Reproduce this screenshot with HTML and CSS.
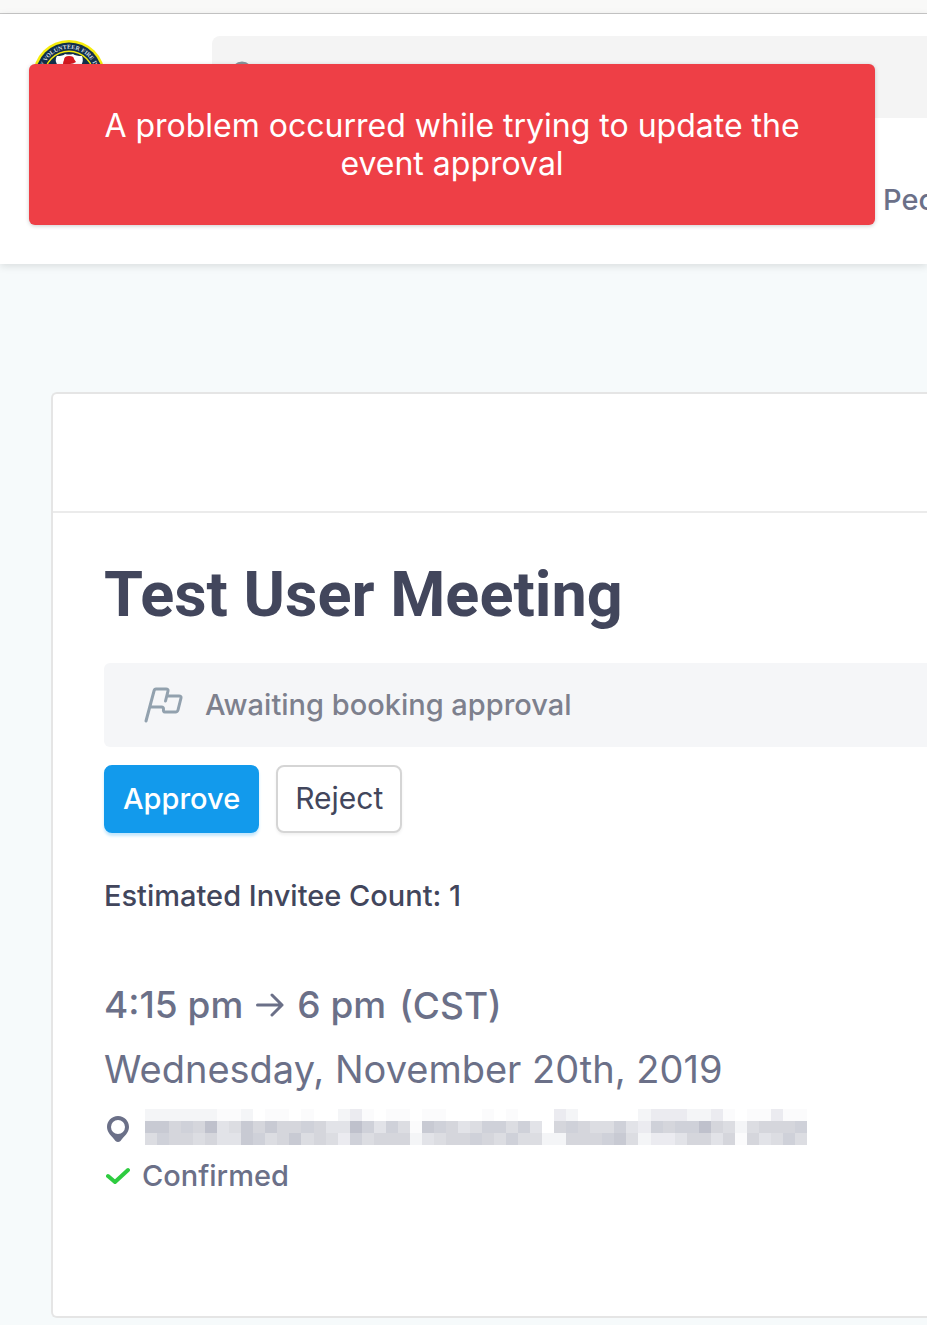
FILE: index.html
```html
<!DOCTYPE html>
<html lang="en">
<head>
<meta charset="utf-8">
<title>Test User Meeting</title>
<link rel="stylesheet" href="styles.css">
</head>
<body>
<div class="browser-edge"></div>
<header class="header">
  <div class="header-top">
    <svg class="logo" viewBox="0 0 72 72" role="img" aria-label="Volunteer Fire Department">
      <defs><path id="ring" d="M17 55A27 27 0 1 1 55 55"/></defs>
      <circle cx="36" cy="36" r="36" fill="#f5ec0c"/>
      <circle cx="36" cy="36" r="33.500" fill="#12304b"/>
      <circle cx="36" cy="36" r="25.500" fill="#f5ec0c"/>
      <circle cx="36" cy="36" r="24" fill="#12304b"/>
      <path d="M24 16q6 0 8-2 4 1 8 0 3 2 9 2 2 4-1 10v15H25V26q-4-6-1-10z" fill="#fff"/>
      <path d="M31 20q0-4 5-4 5 0 5 3l2 3q-3 2-6 2-5 2-7 0 0-2 1-4z" fill="#d31920"/>
      <text class="logo-text" text-anchor="middle"><textPath href="#ring" startOffset="50%">CITY VOLUNTEER FIRE DEPT</textPath></text>
    </svg>
    <label class="search">
      <svg class="search-icon" viewBox="0 0 26 32" aria-hidden="true"><circle cx="10" cy="11" r="9"/><path d="M17 18l7 8"/></svg>
      <input class="search-input" type="search" aria-label="Search">
    </label>
  </div>
  <nav class="nav"><a class="nav-link" href="#people">People</a></nav>
</header>
<div class="toast" role="alert">A problem occurred while trying to update the event approval</div>
<main class="page">
  <article class="card">
    <div class="card-bar"></div>
    <div class="card-body">
      <h1 class="title">Test User Meeting</h1>
      <div class="notice">
        <svg class="flag" viewBox="0 0 40 36" aria-hidden="true"><path d="M2 34L10 4Q10.500 2 12 2H22Q24.500 2 24 4L21.500 14M23 9H35Q37.500 9 37 11L34 23Q33.500 25 31.500 25H21Q19 25 19.500 22Q19.500 20 17.500 20H6"/></svg>
        <span>Awaiting booking approval</span>
      </div>
      <div class="actions">
        <button class="button button-primary" type="button">Approve</button>
        <button class="button" type="button">Reject</button>
      </div>
      <p class="count">Estimated Invitee Count: 1</p>
      <div class="time">
        <span>4:15 pm</span>
        <svg class="arrow" viewBox="0 0 28 24" aria-hidden="true"><path d="M1.500 12H26M16 2L26 12L16 22"/></svg>
        <span>6 pm</span>
        <span class="zone">(CST)</span>
      </div>
      <p class="date">Wednesday, November 20th, 2019</p>
      <div class="place">
        <svg class="pin" viewBox="0 0 22 26" aria-hidden="true"><path fill-rule="evenodd" d="M11 0C4.500 0 0 5 0 11C0 17 5 20 8.500 25Q11 27 13.500 25C17 20 22 17 22 11C22 5 17.500 0 11 0ZM11 4A7 7 0 1 1 11 18A7 7 0 1 1 11 4Z"/></svg>
        <svg class="redacted" viewBox="0 0 55 3" preserveAspectRatio="none" shape-rendering="crispEdges" role="img" aria-label="Address hidden"></svg>
      </div>
      <div class="status">
        <svg class="check" viewBox="0 0 24 18" aria-hidden="true"><path d="M2 9L9 15L22 3"/></svg>
        <span>Confirmed</span>
      </div>
    </div>
  </article>
</main>
<script src="redact.js"></script>
</body>
</html>
```
FILE: redact.js
```js
// Fills the hidden address with a mosaic; each digit is a shade.
const shades = ["#ffffff", "#fbfbfc", "#f4f5f7", "#ebebf0", "#e2e3e8", "#dcdde2", "#d5d6dc", "#cfd1d9", "#c8cad3", "#bfc1cc"];
const rows = [
  "2222221120110100231" + "011011000101000320" + "000023332231011311",
  "8867694586866764497" + "475187645775740676" + "557437677965256667",
  "5766564487568565375" + "666245667657552266" + "678523346646164575"
];
const mosaic = document.querySelector(".redacted");
rows.forEach((row, y) => {
  [...row].forEach((shade, x) => {
    const cell = document.createElementNS("http://www.w3.org/2000/svg", "rect");
    cell.setAttribute("x", x);
    cell.setAttribute("y", y);
    cell.setAttribute("width", 1);
    cell.setAttribute("height", 1);
    cell.setAttribute("fill", shades[shade]);
    mosaic.append(cell);
  });
});
```
FILE: styles.css
```css
* { box-sizing: border-box; }
body {
  margin: 0;
  background: #f6fafb;
  color: #6b7088;
  font-family: Inter, "Liberation Sans", sans-serif;
}
.browser-edge { height: 14px; background: #f9f9f8; border-bottom: 1px solid #c8c8c8; }
.header { height: 250px; background: #fff; box-shadow: 0 2px 8px rgba(0, 0, 0, 0.12); }
.header-top { display: flex; gap: 107px; padding: 22px 0 0 33px; }
.logo { width: 72px; height: 72px; margin-top: 4px; flex: none; }
.logo-text { font: 700 6px "Liberation Serif", serif; fill: #d9dfe3; }
.search { display: flex; align-items: center; flex: 1; height: 82px; padding-left: 20px; background: #f4f4f4; border-radius: 8px 0 0 8px; }
.search-icon { width: 26px; height: 32px; fill: none; stroke: #89949b; stroke-width: 3; }
.search-input { flex: 1; min-width: 0; border: 0; background: none; font: inherit; }
.nav { display: flex; overflow: hidden; padding: 64px 0 0 883px; }
.nav-link { color: #6b7088; font-size: 29px; font-weight: 500; line-height: 36px; text-decoration: none; }
.toast {
  position: absolute;
  top: 64px;
  left: 29px;
  right: 52px;
  padding: 43px 64px 42px;
  border-radius: 6px;
  background: #ee3f46;
  box-shadow: 0 1px 4px rgba(0, 0, 0, 0.2);
  color: #fff;
  font-size: 32px;
  line-height: 38px;
  text-align: center;
}
.page { padding: 128px 0 8px 51px; }
.card { background: #fff; border: 2px solid #e5e5e5; border-right: 0; border-radius: 6px 0 0 6px; }
.card-bar { height: 119px; border-bottom: 2px solid #ebebeb; }
.card-body { padding: 44px 0 122px 51px; }
.title { margin: 0; color: #42465c; font-family: Roboto, sans-serif; font-size: 63px; font-weight: 700; line-height: 76px; }
.notice { display: flex; align-items: center; gap: 21px; height: 84px; margin-top: 30px; padding: 0 0 2px 40px; border-radius: 6px 0 0 6px; background: #f5f6f8; color: #7d808d; font-size: 29px; font-weight: 500; }
.flag { width: 40px; height: 36px; margin-top: 2px; fill: none; stroke: #92a1ae; stroke-width: 3; stroke-linecap: round; stroke-linejoin: round; }
.actions { display: flex; gap: 17px; margin-top: 18px; }
.button { height: 68px; padding: 0 17px 2px; border: 2px solid #d5d5d5; border-radius: 8px; background: #fff; box-shadow: 0 2px 3px rgba(0, 0, 0, 0.06); color: #42465c; font-family: inherit; font-size: 30px; }
.button-primary { border-color: #129aec; background: #129aec; box-shadow: 0 3px 3px #c4e7fc; color: #fff; font-size: 29px; font-weight: 500; }
.count { margin: 45px 0 0; color: #42465c; font-size: 29px; font-weight: 500; line-height: 36px; }
.time { display: flex; align-items: center; gap: 13px; margin-top: 66px; font-size: 37px; font-weight: 500; line-height: 48px; }
.zone { padding-top: 2px; }
.arrow { width: 28px; height: 24px; fill: none; stroke: #6b7088; stroke-width: 3; stroke-linecap: round; stroke-linejoin: round; }
.date { margin: 15px 0 0; font-size: 38px; line-height: 48px; }
.place { display: flex; align-items: center; gap: 16px; height: 40px; margin-top: 14px; }
.pin { flex: none; width: 22px; height: 26px; margin: 4px 0 0 3px; fill: #6b7088; }
.redacted { flex: 0 1 662px; min-width: 0; height: 36px; }
.status { display: flex; align-items: center; gap: 12px; margin-top: 11px; font-size: 29px; font-weight: 500; line-height: 36px; }
.check { width: 24px; height: 18px; margin-left: 2px; fill: none; stroke: #2ecc40; stroke-width: 4; stroke-linecap: round; stroke-linejoin: round; }
```
